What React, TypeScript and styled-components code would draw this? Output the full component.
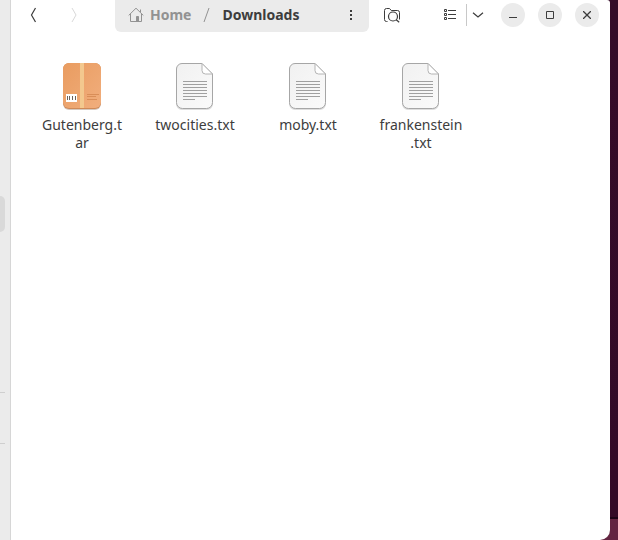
import React from "react";
import styled, { createGlobalStyle } from "styled-components";

const GlobalStyle = createGlobalStyle`
  * { box-sizing: border-box; }
  body {
    margin: 0;
    overflow: hidden;
    font-family: "Noto Sans", "Open Sans", sans-serif;
    color: #3d3d3d;
  }
  button { font: inherit; color: inherit; border: 0; padding: 0; background: none; }
  svg { display: block; }
`;

const Desktop = styled.div`
  display: flex;
  min-height: 100vh;
  padding-right: 8px;
  background: linear-gradient(to top, #642542 21px, #1c0316 21px, #1c0316 23px, #340a27 23px, #350b28 100%);
`;

const Window = styled.div`
  display: flex;
  flex: 1;
  overflow: hidden;
  background: #ffffff;
  border-radius: 0 3px 10px 0;
`;

const Sidebar = styled.aside`
  display: flex;
  flex-direction: column;
  flex: none;
  width: 11px;
  padding: 196px 5px 0 0;
  background: #ebebeb;
  border-right: 1px solid #d6d6d6;
`;

const SelectedPlace = styled.div`
  height: 36px;
  margin-bottom: 160px;
  background: #d9d9d9;
  border-radius: 0 6px 6px 0;
`;

const PlaceDivider = styled.hr`
  width: 100%;
  height: 1px;
  margin: 0 0 50px;
  border: 0;
  background: #cfcfcf;
`;

const Main = styled.main`
  flex: 1;
  min-width: 0;
`;

const Header = styled.header`
  display: flex;
  align-items: center;
  height: 30px;
  padding: 0 11px 0 10px;
`;

const IconButton = styled.button<{ $faded?: boolean }>`
  display: grid;
  place-items: center;
  flex: none;
  width: 24px;
  height: 24px;
  color: ${(p) => (p.$faded ? "#d9d9d9" : "#3d3d3d")};
`;

const NavGroup = styled.nav`
  display: flex;
  gap: 17px;
  margin-right: 29px;
`;

const PathBar = styled.div`
  display: flex;
  align-items: center;
  align-self: flex-start;
  flex: 1;
  min-width: 0;
  height: 32px;
  padding: 0 6px 2px 13px;
  background: #ebebeb;
  border-radius: 0 0 6px 6px;
  font-size: 14px;
  font-weight: 700;
  line-height: 20px;
`;

const Crumb = styled.button<{ $current?: boolean }>`
  display: flex;
  align-items: center;
  gap: 6px;
  color: ${(p) => (p.$current ? "#3d3d3d" : "#929292")};
`;

const Slash = styled.svg`
  flex: none;
  margin: 0 12px;
  stroke: #929292;
`;

const PathMenu = styled(IconButton)`
  margin-left: auto;
`;

const SearchButton = styled(IconButton)`
  margin: 0 34px 0 11px;
`;

const ViewSwitch = styled.div`
  display: flex;
  align-items: center;
`;

const Separator = styled.span`
  width: 1px;
  height: 22px;
  margin-left: 4px;
  background: #c8c8c8;
`;

const ViewMenu = styled(IconButton)`
  width: 22px;
`;

const WindowControls = styled.div`
  display: flex;
  gap: 13px;
  margin-left: 12px;
`;

const RoundButton = styled(IconButton)`
  border-radius: 50%;
  background: #ebebeb;
`;

const FileGrid = styled.ul`
  display: grid;
  grid-template-columns: repeat(auto-fill, 112px);
  column-gap: 1px;
  margin: 0;
  padding: 32px 15px;
  list-style: none;
`;

const FileItem = styled.button`
  display: flex;
  flex-direction: column;
  align-items: center;
  gap: 5px;
  width: 100%;
`;

const FileName = styled.span`
  font-size: 14px;
  line-height: 18px;
  text-align: center;
  white-space: pre-line;
`;

const HomeIcon = () => (
  <svg width="16" height="16" viewBox="0 0 16 16" fill="none" stroke="currentColor">
    <path d="M.7 8.4 8 1.2l7.3 7.2M2.5 7v7.5h11V7M12.5 5V2.5" />
    <path d="M8.500 9.500h2V14h-2z" fill="currentColor" />
  </svg>
);

const FolderSearchIcon = () => (
  <svg width="18" height="16" viewBox="0 0 18 16" fill="none" stroke="currentColor">
    <path d="M4.500 14.500h-1a2 2 0 0 1-2-2v-9a2 2 0 0 1 2-2h3l1.800 2h6.200a2 2 0 0 1 2 2v7" />
    <circle cx="10" cy="9.500" r="4.500" strokeWidth="1.200" />
    <path d="m13.200 12.700 3 2.600" strokeWidth="1.200" />
  </svg>
);

const ListIcon = () => (
  <svg width="12" height="12" viewBox="0 0 12 12" fill="none" stroke="currentColor">
    <path d="M.5.500h2v2h-2zM.5 4.500h2v2h-2zM.5 8.500h2v2h-2z" />
    <path d="M4 1.500h8M4 5.500h8M4 9.500h8" />
  </svg>
);

const TextFileIcon = () => (
  <svg width="42" height="49" viewBox="0 0 42 49" fill="none">
    <defs>
      <linearGradient id="paper" x1="0" y1="0" x2="1" y2="1">
        <stop stopColor="#f1f1f1" />
        <stop offset="1" stopColor="#fafafa" />
      </linearGradient>
    </defs>
    <path d="M8 2.500h20l11 11V42a6 6 0 0 1-6 6H8a6 6 0 0 1-6-6V8a6 6 0 0 1 6-5.500z" fill="#dedede" />
    <path d="M8 1.500h20l11.500 10.500" stroke="none" />
    <path d="M8 1.500h20l10.500 10.500V40.500a6 6 0 0 1-6 6H8.500a6 6 0 0 1-6-6V7A5.500 5.500 0 0 1 8 1.500z" fill="url(#paper)" stroke="#a6a6a6" />
    <path d="M28 1.500v7a3.500 3.500 0 0 0 3.500 3.500h7z" fill="#fff" stroke="#b4b4b4" />
    <path d="M9 19.500h24M9 22.500h24M9 25.500h24M9 28.500h24M9 31.500h24M9 34.500h24M9 37.500h12" stroke="#a0a0a0" />
  </svg>
);

const ArchiveIcon = () => (
  <svg width="42" height="49" viewBox="0 0 42 49">
    <defs>
      <linearGradient id="carton" x1="0" y1="0" x2="1" y2="1">
        <stop stopColor="#e99c60" />
        <stop offset="1" stopColor="#f1ae7d" />
      </linearGradient>
    </defs>
    <rect x="2" y="3" width="38" height="45" rx="6" fill="#d5c8bf" />
    <rect x="2" y="1" width="38" height="46" rx="6" fill="#cf8a58" />
    <rect x="2" y="1" width="38" height="45" rx="6" fill="url(#carton)" />
    <path d="M19 1h4v45h-4z" fill="#f3c88e" />
    <path d="M5 32h11v8H5z" fill="#fff" />
    <path d="M6.500 34v4M8.500 34v4M11.500 34v4M14.500 34v4" stroke="#6a625d" />
    <path d="M26 32.500h12M26 34.500h9M26 37.500h10" stroke="#d98e58" />
  </svg>
);

const files = [
  { name: "Gutenberg.t\nar", archive: true },
  { name: "twocities.txt" },
  { name: "moby.txt" },
  { name: "frankenstein\n.txt" },
];

export default function App() {
  return (
    <Desktop>
      <GlobalStyle />
      <Window>
        <Sidebar>
          <SelectedPlace />
          <PlaceDivider />
          <PlaceDivider />
        </Sidebar>
        <Main>
          <Header>
            <NavGroup>
              <IconButton aria-label="Back">
                <svg width="8" height="16" viewBox="0 0 8 16" fill="none" stroke="currentColor" strokeWidth="1.200">
                  <path d="M6.500 1 2.500 8l4 7" />
                </svg>
              </IconButton>
              <IconButton $faded disabled aria-label="Forward">
                <svg width="8" height="16" viewBox="0 0 8 16" fill="none" stroke="currentColor">
                  <path d="M2 1l4 7-4 7" />
                </svg>
              </IconButton>
            </NavGroup>
            <PathBar>
              <Crumb><HomeIcon />Home</Crumb>
              <Slash width="7" height="16" viewBox="0 0 7 16" role="presentation">
                <path d="M6 1 1 15" />
              </Slash>
              <Crumb $current>Downloads</Crumb>
              <PathMenu aria-label="Folder menu">
                <svg width="2" height="10" viewBox="0 0 2 10" fill="currentColor">
                  <path d="M0 0h2v2H0zM0 4h2v2H0zM0 8h2v2H0z" />
                </svg>
              </PathMenu>
            </PathBar>
            <SearchButton aria-label="Search"><FolderSearchIcon /></SearchButton>
            <ViewSwitch>
              <IconButton aria-label="List view"><ListIcon /></IconButton>
              <Separator />
              <ViewMenu aria-label="View options">
                <svg width="12" height="6" viewBox="0 0 12 6" fill="none" stroke="currentColor" strokeWidth="1.200">
                  <path d="m1 .7 5 4.300 5-4.300" />
                </svg>
              </ViewMenu>
            </ViewSwitch>
            <WindowControls>
              <RoundButton aria-label="Minimize">
                <svg width="8" height="8" viewBox="0 0 8 8" stroke="currentColor"><path d="M0 6.500h8" /></svg>
              </RoundButton>
              <RoundButton aria-label="Maximize">
                <svg width="8" height="8" viewBox="0 0 8 8" fill="none" stroke="currentColor"><path d="M.5.500h7v7h-7z" /></svg>
              </RoundButton>
              <RoundButton aria-label="Close">
                <svg width="8" height="8" viewBox="0 0 8 8" stroke="currentColor" strokeWidth="1.300"><path d="m0 0 8 8M8 0 0 8" /></svg>
              </RoundButton>
            </WindowControls>
          </Header>
          <FileGrid>
            {files.map((file) => (
              <li key={file.name}>
                <FileItem>
                  {file.archive ? <ArchiveIcon /> : <TextFileIcon />}
                  <FileName>{file.name}</FileName>
                </FileItem>
              </li>
            ))}
          </FileGrid>
        </Main>
      </Window>
    </Desktop>
  );
}
